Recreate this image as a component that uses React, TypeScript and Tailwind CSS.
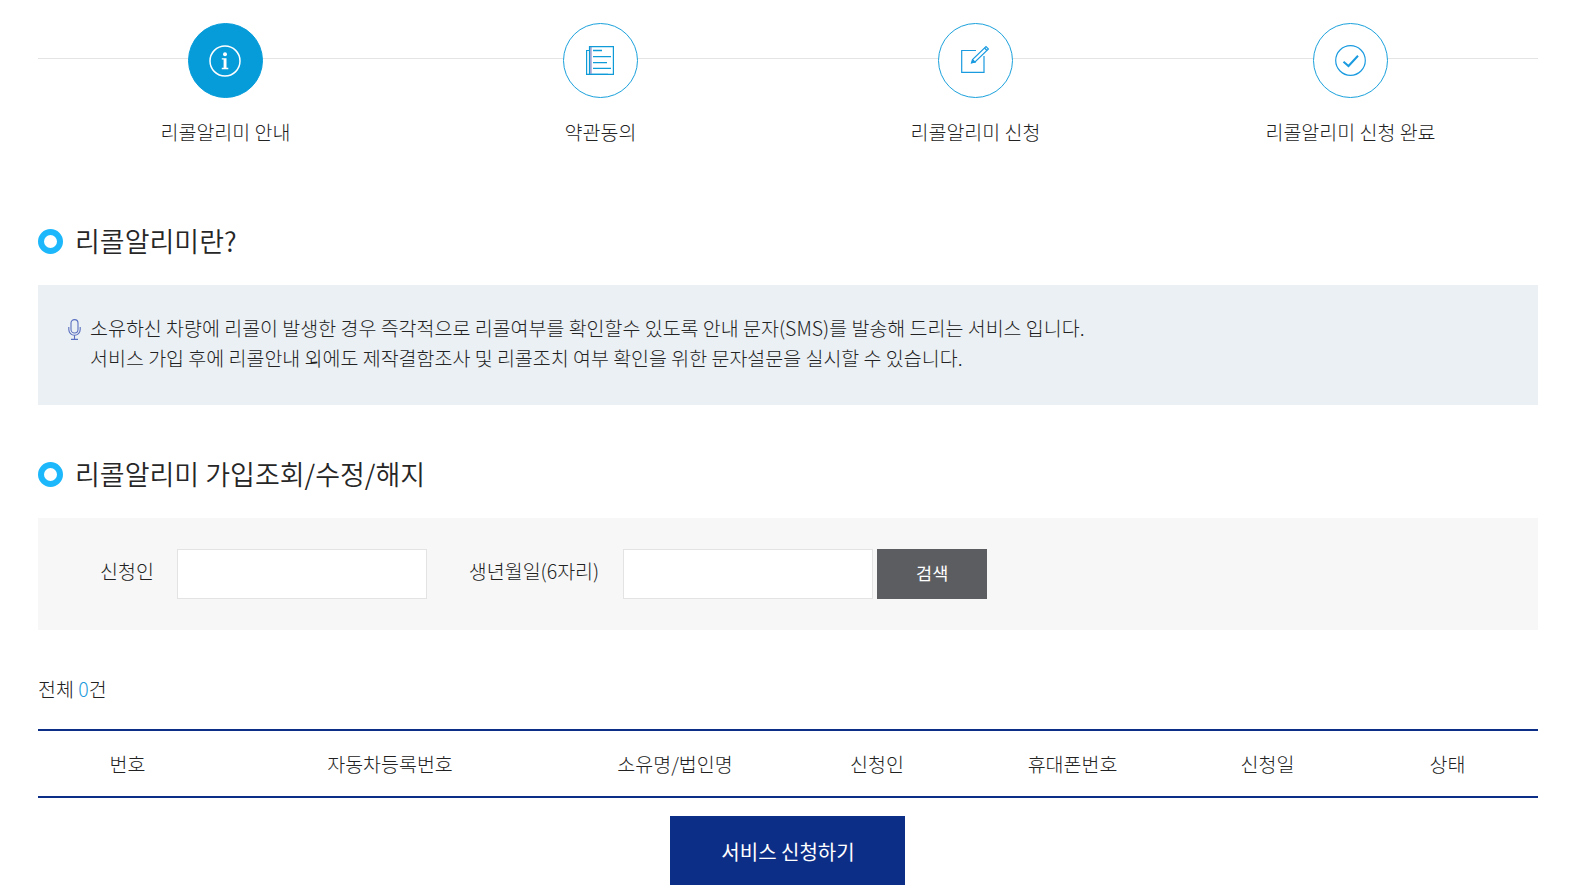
const FONT = 'font-["Noto_Sans_CJK_KR","Noto_Sans",sans-serif]';

function InfoIcon() {
  return (
    <svg className="mr-[2px]" width="32" height="32" viewBox="0 0 32 32" fill="none">
      <circle cx="16" cy="16" r="15" stroke="#fff" strokeWidth="1.5" />
      <circle cx="16" cy="9.200" r="2" fill="#fff" />
      <path d="M12.800 13.200h4.700v9.600h1.800v1.400h-6.500v-1.400h1.800v-8.200h-1.800z" fill="#fff" />
    </svg>
  );
}

function DocIcon() {
  return (
    <svg className="mr-[2px]" width="28" height="29" viewBox="0 0 28 29" fill="none" stroke="#0e9bd8" strokeWidth="1.200">
      <path d="M3 4.500h-2.400v23.900h21.400" />
      <path d="M4.800 1v27" stroke="#a9a9d6" strokeWidth="2" />
      <path d="M3.500 0.600h23.900v27.800h-23.900z" />
      <path d="M7 4.500h9M7 10.700h18M7 16.700h14M7 22.300h18" strokeWidth="1.300" />
    </svg>
  );
}

function EditIcon() {
  return (
    <svg className="mr-[2px] mb-[3px]" width="28" height="28" viewBox="0 0 28 28" fill="none" stroke="#1a9be0" strokeWidth="1.200">
      <path d="M15 5.500h-14.300v21.900h22.300v-16.400" />
      <path d="M10.500 18l1-3.500 13.500-13 2.500 2.500-13.500 13z" fill="#fff" />
      <path d="M11 17.500l1-2.500 2 2z" fill="#1a9be0" />
      <path d="M23.500 3l2.500 2.500" />
    </svg>
  );
}

function CheckIcon() {
  return (
    <svg width="31" height="31" viewBox="0 0 31 31" fill="none" stroke="#1a9be0">
      <circle cx="15.500" cy="15.500" r="14.800" strokeWidth="1.200" />
      <path d="M8.500 16.700l5 4.300 9.500-10.300" strokeWidth="2" />
    </svg>
  );
}

function MicIcon() {
  return (
    <svg width="13" height="21" viewBox="0 0 13 21" fill="none" stroke="#5a6fc0" strokeWidth="1.100">
      <rect x="3" y="0.600" width="7" height="13.400" rx="3.500" />
      <path d="M0.800 8v2.500a5.700 5.700 0 0 0 11.400 0v-2.500M6.500 16.500v3.800M3 20.400h7" />
    </svg>
  );
}

function Step({ label, icon, active }: { label: string; icon: React.ReactNode; active?: boolean }) {
  return (
    <li className="flex flex-col items-center">
      <div
        className={`flex h-[75px] w-[75px] items-center justify-center rounded-full border ${
          active ? 'border-[#069cda] bg-[#069cda]' : 'border-[#1ba1dc] bg-white'
        }`}
      >
        {icon}
      </div>
      <span className="mt-[20px] text-[19.500px] leading-[28px] font-light text-[#222]">{label}</span>
    </li>
  );
}

function SectionTitle({ children }: { children: React.ReactNode }) {
  return (
    <h2 className="flex items-center gap-[12px] text-[27px] leading-[40px] font-[350] text-[#262626]">
      <span className="h-[25px] w-[25px] rounded-full border-[6px] border-[#1cb8fb] bg-white" />
      {children}
    </h2>
  );
}

const columns = [
  { label: '번호', className: 'w-[179px]' },
  { label: '자동차등록번호', className: 'w-[344px] pl-[2px]' },
  { label: '소유명/법인명', className: 'w-[228px]' },
  { label: '신청인', className: 'w-[176px]' },
  { label: '휴대폰번호', className: 'w-[215px]' },
  { label: '신청일', className: 'w-[175px]' },
  { label: '상태', className: 'w-[183px] pl-[2px]' },
];

export default function App() {
  return (
    <div className={`${FONT} h-[891px] overflow-hidden bg-white pt-[23px] pl-[38px] text-[#222]`}>
      <div className="w-[1500px]">
        <div className="relative">
          <div className="absolute top-[35px] right-0 left-0 h-px bg-[#e4e4e4]" />
          <ol className="relative grid grid-cols-4">
            <Step label="리콜알리미 안내" icon={<InfoIcon />} active />
            <Step label="약관동의" icon={<DocIcon />} />
            <Step label="리콜알리미 신청" icon={<EditIcon />} />
            <Step label="리콜알리미 신청 완료" icon={<CheckIcon />} />
          </ol>
        </div>

        <div className="mt-[75px]">
          <SectionTitle>리콜알리미란?</SectionTitle>
        </div>

        <div className="mt-[24px] flex h-[120px] gap-[9px] bg-[#ebf0f4] pt-[28px] pl-[30px]">
          <div className="pt-[6px]">
            <MicIcon />
          </div>
          <p className="text-[19.500px] leading-[30px] font-light">
            소유하신 차량에 리콜이 발생한 경우 즉각적으로 리콜여부를 확인할수 있도록 안내 문자(SMS)를 발송해 드리는 서비스 입니다.
            <br />
            서비스 가입 후에 리콜안내 외에도 제작결함조사 및 리콜조치 여부 확인을 위한 문자설문을 실시할 수 있습니다.
          </p>
        </div>

        <div className="mt-[49px]">
          <SectionTitle>리콜알리미 가입조회/수정/해지</SectionTitle>
        </div>

        <div className="mt-[24px] flex h-[112px] items-center bg-[#f7f7f7] pl-[62px]">
          <label className="mr-[23px] mb-[7px] text-[19.500px] font-light">신청인</label>
          <input className="h-[50px] w-[250px] border border-[#e3e3e3] bg-white" />
          <label className="mr-[24px] mb-[7px] ml-[42px] text-[19.500px] font-light">생년월일(6자리)</label>
          <input className="h-[50px] w-[250px] border border-[#e3e3e3] bg-white" />
          <button className="ml-[4px] h-[50px] w-[110px] bg-[#5c5d61] pb-[2px] text-[17.500px] text-white">검색</button>
        </div>

        <p className="mt-[45px] text-[19.500px] leading-[28px] font-light">
          전체 <span className="text-[#1f9bdc]">0</span>건
        </p>

        <table className="mt-[26px] w-full table-fixed border-y-2 border-[#0d2e87]">
          <thead>
            <tr>
              {columns.map((col) => (
                <th key={col.label} className={`${col.className} h-[67px] pt-[1px] text-[19.500px] font-light`}>
                  {col.label}
                </th>
              ))}
            </tr>
          </thead>
        </table>

        <div className="mt-[18px] flex justify-center">
          <button className="mr-[2px] h-[69px] w-[235px] bg-[#0d2e87] pt-[2px] pl-[2px] text-[20px] text-white">서비스 신청하기</button>
        </div>
      </div>
    </div>
  );
}
